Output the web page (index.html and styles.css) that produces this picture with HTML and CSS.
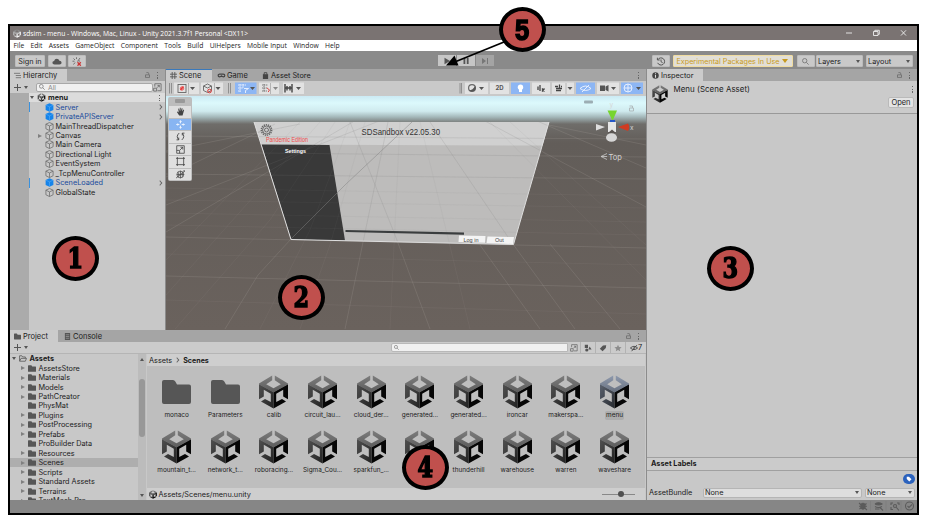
FILE: index.html
```
<!DOCTYPE html>
<html lang="en">
<head>
<meta charset="utf-8">
<title>sdsim - menu - Unity</title>
<link rel="stylesheet" href="styles.css">
</head>
<body>
<svg class="defs" aria-hidden="true">
  <defs>
    <linearGradient id="topface" x1="0" y1="0" x2="0" y2="1"><stop offset="0" stop-color="#7d7d7d"/><stop offset="1" stop-color="#5c5c5c"/></linearGradient>
    <linearGradient id="leftface" x1="0" y1="0" x2="1" y2="1"><stop offset="0" stop-color="#505050"/><stop offset="1" stop-color="#222"/></linearGradient>
    <symbol id="unity" viewBox="0 0 29 34">
      <path fill="url(#leftface)" d="M0 9L14.5 17V33.5L2 26.5L6 24L11.8 27V18.8L4.8 14.8V21.5L0 24.3Z"/>
      <path fill="#060606" d="M29 9L14.5 17V33.5L27 26.5L23 24L17.2 27V18.8L24.2 14.8V21.5L29 24.3Z"/>
      <path class="top" d="M0 8.4L13.2 .5V5.2L7.2 9.2L14.5 13.3L21.8 9.2L15.8 5.2V.5L29 8.4V9.4L14.5 17.6L0 9.4Z"/>
    </symbol>
    <symbol id="folder" viewBox="0 0 29 24"><path fill="#565656" d="M0 2Q0 0 2 0H11Q12.5 0 13.3 1.5L15 4.5H27Q29 4.5 29 6.5V22Q29 24 27 24H2Q0 24 0 22Z"/></symbol>
    <symbol id="cube" viewBox="0 0 10 10"><path fill="none" stroke="#707070" stroke-width=".9" d="M5 .6L9 2.4V7.5L5 9.5L1 7.5V2.4ZM1 2.4L5 4.4L9 2.4M5 4.4V9.5"/></symbol>
    <symbol id="prefab" viewBox="0 0 10 10"><path fill="#1684ea" d="M5 .3L9.3 2.2V7.8L5 9.8L.7 7.8V2.2Z"/><path fill="none" stroke="#6bb9fa" stroke-width=".5" d="M1 2.4L5 4.3L9 2.4M5 4.3V9"/></symbol>
    <symbol id="lock" viewBox="0 0 6 7"><path fill="none" stroke="#666" stroke-width=".9" d="M.6 3.3H5.4V6.4H.6ZM4.4 3V1.5Q4.4.6 3.4.6H1.7"/></symbol>
    <symbol id="search" viewBox="0 0 8 8"><path fill="none" stroke="#777" stroke-width="1" d="M5 5L7.6 7.6M.6 3.1a2.5 2.5 0 1 0 5 0a2.5 2.5 0 1 0 -5 0"/></symbol>
    <symbol id="expand" viewBox="0 0 10 10"><path fill="none" stroke="#666" stroke-width=".9" d="M2 4V.8H9V8.6H5M.7 5.8H4V9H.7ZM4.4 5.3L7 2.7M5 2.7H7V4.8"/></symbol>
  </defs>
</svg>

<div class="window">
  <header class="title"><svg class="i8 bright"><use href="#unity"/></svg><span>sdsim - menu - Windows, Mac, Linux - Unity 2021.3.7f1 Personal &lt;DX11&gt;</span>
    <svg class="winctl" viewBox="0 0 64 10"><path fill="none" stroke="#eee" stroke-width=".9" d="M1 5H7M28.500 3.500H33V7.500H28.500ZM29.800 3.500V2.300H34.300V6.300H33M56 2.300L61 7.500M61 2.300L56 7.500"/></svg>
  </header>
  <nav class="menu"><span>File</span><span>Edit</span><span>Assets</span><span>GameObject</span><span>Component</span><span>Tools</span><span>Build</span><span>UiHelpers</span><span>Mobile Input</span><span>Window</span><span>Help</span></nav>

  <div class="toolbar">
    <div class="tbtn signin">Sign in</div>
    <div class="tbtn w18"><svg viewBox="0 0 10 8"><path fill="#555" d="M2.500 7Q.4 7 .4 5.200Q.4 3.600 2.100 3.400Q2.700 1.200 4.800 1.200Q6.800 1.200 7.400 3.200Q9.600 3.300 9.600 5.200Q9.600 7 7.500 7Z"/></svg></div>
    <div class="tbtn w18"><svg viewBox="0 0 10 9"><path fill="none" stroke="#666" stroke-width=".9" d="M.5 4.200H2.500M4.500 .3V2M1.500 1.500L3 3M8 1L5.500 4.500M1.500 7.500L3 5.500M6.500 4H8"/><path stroke="#c33" stroke-width="1.300" d="M5.500 5.300L8.800 8.700M8.800 5.300L5.500 8.700"/></svg></div>
    <div class="play">
      <div><svg viewBox="0 0 8 8"><path fill="#555" d="M1.500 .8L7 4L1.500 7.200Z"/></svg></div>
      <div><svg viewBox="0 0 8 8"><path fill="#555" d="M1.500 1H3.300V7H1.500ZM4.800 1H6.600V7H4.800Z"/></svg></div>
      <div class="off"><svg viewBox="0 0 8 8"><path fill="#777" d="M1 1L5 4L1 7ZM6 1H7V7H6Z"/></svg></div>
    </div>
    <div class="tbtn w18 hist"><svg viewBox="0 0 10 10"><path fill="none" stroke="#555" stroke-width="1.100" d="M1.500 3A4 4 0 1 1 1.300 6.500M1 .8V3.300H3.500M5 2.700V5.200L6.800 6.300"/></svg></div>
    <div class="tbtn exp">Experimental Packages In Use<i class="dn gold"></i></div>
    <div class="tbtn w18 find"><svg><use href="#search"/></svg></div>
    <div class="tbtn drop layers">Layers<i class="dn"></i></div>
    <div class="tbtn drop layout">Layout<i class="dn"></i></div>
  </div>

  <main class="work">
    <div class="left">
      <div class="upper">
        <section class="hierarchy">
          <div class="strip"><div class="tab on"><svg viewBox="0 0 8 8"><path stroke="#666" stroke-width=".9" d="M0 1.500H7M2 4H8M2 6.500H8"/></svg>Hierarchy</div><span class="grow"></span><svg class="lk"><use href="#lock"/></svg><b class="dots"></b></div>
          <div class="row-tools"><b class="plus"></b><i class="dn"></i><div class="field"><svg><use href="#search"/></svg>All</div><svg class="ex"><use href="#expand"/></svg></div>
          <div class="tree">
            <div class="gutter"></div>
            <div class="items">
              <div class="it scene"><i class="dn"></i><svg class="i8"><use href="#unity"/></svg><b>menu</b><b class="dots"></b></div>
              <div class="it blue"><svg><use href="#prefab"/></svg>Server<em></em></div>
              <div class="it blue nomark"><svg><use href="#prefab"/></svg>PrivateAPIServer<em></em></div>
              <div class="it"><svg><use href="#cube"/></svg>MainThreadDispatcher</div>
              <div class="it"><i class="rt"></i><svg><use href="#cube"/></svg>Canvas</div>
              <div class="it"><svg><use href="#cube"/></svg>Main Camera</div>
              <div class="it"><svg><use href="#cube"/></svg>Directional Light</div>
              <div class="it"><svg><use href="#cube"/></svg>EventSystem</div>
              <div class="it"><svg><use href="#cube"/></svg>_TcpMenuController</div>
              <div class="it blue"><svg><use href="#prefab"/></svg>SceneLoaded<em></em></div>
              <div class="it"><svg><use href="#cube"/></svg>GlobalState</div>
            </div>
          </div>
        </section>

        <section class="sceneview">
          <div class="strip"><div class="tab on sel"><svg viewBox="0 0 8 8"><path fill="none" stroke="#555" d="M2.500 0V8M5.500 0V8M0 2.500H8M0 5.500H8"/></svg>Scene</div><div class="tab game"><svg viewBox="0 0 9 8"><path fill="none" stroke="#444" stroke-width="1.300" d="M2.500 2.500H6.500Q8.300 2.500 8.300 4T6.500 5.600Q5.500 5.600 4.500 4.500Q3.500 5.600 2.500 5.600Q.7 5.600 .7 4T2.500 2.500"/></svg>Game</div><div class="tab store"><svg viewBox="0 0 8 8"><path fill="#444" d="M1 2.500H7V8H1Z"/><path fill="none" stroke="#444" d="M2.500 3V.8H5.500V3"/></svg>Asset Store</div><span class="grow"></span><b class="dots"></b></div>
          <svg class="viewtools" viewBox="166 81 480 15">
            <rect x="166" y="81" width="480" height="15" fill="#c9c9c9"/>
            <path stroke="#909090" d="M169.500 83V93.500M171.500 83V93.500M228.500 83V93.500M230.500 83V93.500M460 83V93.500M461.500 83V93.500"/>
            <g fill="#e2e2e2"><rect x="174" y="82.500" width="25" height="11.500"/><rect x="201" y="82.500" width="22" height="11.500"/><rect x="259" y="82.500" width="20" height="11.500"/><rect x="283" y="82.500" width="21" height="11.500"/><rect x="465" y="82.500" width="23" height="11.500"/><rect x="490" y="82.500" width="19" height="11.500"/><rect x="532" y="82.500" width="18" height="11.500"/><rect x="552" y="82.500" width="22" height="11.500"/><rect x="597" y="82.500" width="22" height="11.500"/></g>
            <g fill="#8db6f4"><rect x="235" y="82.500" width="21.500" height="11.500"/><rect x="511" y="82.500" width="19" height="11.500"/><rect x="576" y="82.500" width="19" height="11.500"/><rect x="621" y="82.500" width="22" height="11.500"/></g>
            <path stroke="#b4b4b4" d="M188.500 83V94M214.500 83V94M270.500 83V94M566 83V94"/>
            <path fill="#555" d="M190 87H195L192.500 90ZM215.500 87H220.500L218 90ZM250 87H255L252.500 90ZM296 87H301L298.500 90ZM479 87H484L481.500 90ZM567.500 87H572.500L570 90ZM611 87H616L613.500 90ZM636 87H641L638.500 90Z"/><path fill="#888" d="M273 87H278L275.500 90Z"/>
            <g fill="none" stroke="#666" stroke-width=".9"><rect x="178" y="84.500" width="8" height="8"/><path d="M203.500 86L207.500 84L211.500 86V90.500L207.500 92.500L203.500 90.500ZM203.500 86L207.500 88L211.500 86"/><path stroke-width=".8" stroke-dasharray="1.300 .6" d="M262 85H268M262 88H267M262 91H267M264 84V92"/><path stroke="#444" stroke-width="1.400" d="M285 84V92.500M287 86V90.500M290 86V90.500M292 84V92.500M285 88H292"/><circle cx="472" cy="88" r="3.400" stroke-width="1.200"/><path stroke="#444" stroke-width="1.300" d="M538 86.500V90M540 85V91M542 88.500L544.500 91.500M544.500 88.500L542 91.500M555 86.500H558M561 86.500H562M556 88.500H562M556 90.500H561M559.500 84.500V88"/></g>
            <path stroke="#d33" stroke-width="1.400" d="M180.500 90L183.500 86.500"/><circle cx="182" cy="88.500" r="1.600" fill="none" stroke="#e44"/><circle cx="209.500" cy="91" r="1.800" fill="none" stroke="#d33"/><path fill="none" stroke="#d44" d="M267 88Q271 90 268 92"/>
            <path fill="#555" d="M474.500 90.500A3.500 3.500 0 0 0 475 86Q473 90 469 90.500Q472 92.500 474.500 90.500M600 85.500H605V91H600ZM605.500 86.500L608.500 85V91.500L605.500 90Z"/>
            <g fill="none" stroke="#eef4ff" stroke-width=".9"><path stroke-dasharray="1.600 .6" d="M238 85H246M238 88H243M238 91H241M240 84V92M243 84V88"/><path d="M244 88.500H248.500L245.500 90.500V93M580 88.500Q585.500 83.500 591 88.500Q585.500 92.500 580 88.500M582 92L589 85"/><circle cx="628" cy="88" r="4"/><path d="M624 88H632M628 84V92"/></g>
            <circle cx="520.500" cy="87.300" r="2.700" fill="#fff"/><path fill="#fff" d="M519 89H522V92H519Z"/><text x="495.500" y="90.400" class="two">2D</text>
          </svg>
          <svg class="viewport" viewBox="166 96 480 234">
            <defs>
              <linearGradient id="sky" x1="0" y1="0" x2="0" y2="1"><stop offset="0" stop-color="#cbeaf4"/><stop offset=".03" stop-color="#dcf9fc"/><stop offset=".065" stop-color="#cfeaee"/><stop offset=".09" stop-color="#a3b7b9"/><stop offset=".12" stop-color="#6f6d6a"/><stop offset=".2" stop-color="#625d59"/><stop offset="1" stop-color="#6a625d"/></linearGradient>
              <clipPath id="board"><path d="M254 122H549L513.500 244.500L291 239.500Z"/></clipPath>
              <clipPath id="ground"><path d="M166 124H646V330H166Z"/></clipPath>
              <g id="gridlines" fill="none">
                <path d="M166 205L440 97M166 151L300 124M166 177L275 124M166 232L390 100M291 239L258 275L225 329M345 329L388 122M166 237L646 248M166 174L646 179M166 152L646 157M166 136L646 139M166 276L646 288M549 125L646 145M440 97L646 207M500 105L646 168M430 122L510 240L575 329M350 122L395 235L430 329M480 245L540 329M550 244L620 329"/>
              </g>
              <g id="finegrid" fill="none"><path d="M166 188L646 196M166 200L646 208M166 213L646 222M166 225L646 235M166 254L646 265M166 300L646 314M175 329L270 220L335 122M260 329L310 230L350 122M300 329L330 245L365 122M390 329L400 122M470 329L420 122M646 280L490 122M646 245L510 122M166 295L320 122M166 260L300 122"/></g>
            </defs>
            <rect x="166" y="96" width="480" height="234" fill="url(#sky)"/>
            <g clip-path="url(#ground)"><use href="#gridlines" stroke="#b9b1ac" stroke-opacity=".22" stroke-width=".8"/><use href="#finegrid" stroke="#b9b1ac" stroke-opacity=".11" stroke-width=".7"/></g>
            <path fill="#bdbcbb" d="M254 122H549L513.500 244.500L291 239.500Z"/>
            <path fill="#d0d0d0" d="M254 122H549L542.500 145.500L261.500 144.500Z"/>
            <path fill="#393939" d="M261.500 144.500L329.500 145L345 240.500L291 239.500Z"/>
            <g clip-path="url(#board)"><use href="#gridlines" stroke="#777" stroke-opacity=".25" stroke-width=".7"/><use href="#finegrid" stroke="#888" stroke-opacity=".14" stroke-width=".6"/></g>
            <path fill="none" stroke="#808080" stroke-opacity=".6" stroke-width=".8" d="M291 239L345 185L412 122"/>
            <path fill="none" stroke="#dedede" stroke-width="1" d="M254 122L291 239.500L513.500 244.500L549 122"/>
            <path stroke="#3a3d3e" stroke-width="2.200" d="M345.500 231L464 233.700"/>
            <path fill="#f4f4f4" d="M459 235.500L485.500 236L485 242.800L458.500 242ZM487.500 236.500L514 237L513 244L486.500 243Z"/>
            <text class="s-btn" x="463.500" y="241.500">Log in</text><text class="s-btn" x="495" y="242.300">Out</text>
            <circle cx="266.500" cy="130" r="5.200" fill="none" stroke="#666" stroke-width="1.400" stroke-dasharray="1.300 .8"/><circle cx="266.500" cy="130" r="4" fill="none" stroke="#555" stroke-width=".8"/><circle cx="266.500" cy="130" r="2" fill="none" stroke="#555" stroke-width=".8"/>
            <text class="s-title" x="361.500" y="135" textLength="78.500" lengthAdjust="spacingAndGlyphs">SDSandbox v22.05.30</text>
            <text class="s-red" x="266" y="142" textLength="42" lengthAdjust="spacingAndGlyphs">Pandemic Edition</text>
            <text class="s-set" x="285" y="153" textLength="21" lengthAdjust="spacingAndGlyphs">Settings</text>
            <g><rect x="584" y="100.500" width="9" height="3" rx="1" fill="#9cadb3"/>
              <text x="609.500" y="107" class="axis">y</text><path fill="#77d52f" d="M607.500 110.500H617L612.500 121Z"/><path fill="#2557c8" d="M610 120H615V123H610Z"/><path fill="#ddd" d="M596 124L605 127L596 130.500Z"/><path fill="#d03b22" d="M618 127L628 123.500Q630.500 127 628 131Z"/><path fill="#e6e6e6" d="M608 122H616V132H608Z"/><path fill="#5a5552" d="M612 129.500L616 133H608Z"/><ellipse cx="611.500" cy="137.500" rx="5.500" ry="4.300" fill="#d6d6d6"/><text x="630" y="129.500" class="axis">x</text>
              <path fill="none" stroke="#ccc" stroke-width=".8" d="M607 153.500L601 156.500L607 159.500M601 156.500H607"/><text x="608.500" y="159.500" class="axis top-label">Top</text>
              <path fill="none" stroke="#b0bbbd" d="M629.500 108H633.500V111H629.500ZM632.500 108V106H629.500"/></g>
          </svg>
          <div class="palette"><span class="grip"></span>
            <div><svg viewBox="0 0 10 10"><path fill="#444" d="M3.500 9.500L1 5.500L1.800 5L3 6L2.500 2L3.300 1.700L4.200 4.700V.8H5.200V4.600L6.500 1.200L7.300 1.600L6.700 5L8.300 2.900L9 3.400L7.300 9.500Z"/></svg></div>
            <div class="act"><svg viewBox="0 0 10 10"><path fill="none" stroke="#fff" stroke-width=".9" d="M5 .8V3.700M5 6.300V9.200M.8 5H3.700M6.300 5H9.200M3.800 2L5 .8L6.200 2M3.800 8L5 9.200L6.200 8M2 3.800L.8 5L2 6.200M8 3.800L9.200 5L8 6.200"/></svg></div>
            <div><svg viewBox="0 0 10 10"><path fill="none" stroke="#444" d="M3.500 1.200Q-.5 5 3 8.500M3 8.700V6.200M3 8.700H.6M6.500 8.800Q10.500 5 7 1.500M7 1.300V3.800M7 1.300H9.400"/></svg></div>
            <div><svg viewBox="0 0 10 10"><path fill="none" stroke="#444" stroke-width=".9" d="M.8 .8H9.200V9.200H.8ZM.8 6H4V9.200M4.500 5.500L7.500 2.500M5 2.500H7.500V5"/></svg></div>
            <div><svg viewBox="0 0 10 10"><path fill="none" stroke="#444" stroke-width=".9" d="M1.500 0V10M8.500 0V10M0 1.500H10M0 8.500H10"/></svg></div>
            <div><svg viewBox="0 0 10 10"><path fill="none" stroke="#444" stroke-width=".8" d="M1 5A3.800 3.800 0 1 1 8.600 5A3.800 3.800 0 1 1 1 5M1 5H9M5 1V9M3 2.500V7.500M7 2.500V7.500M0 9L10 1M8 1H10"/></svg></div>
          </div>
        </section>
      </div>

      <section class="project">
        <div class="strip"><div class="tab on pj"><svg><use href="#folder"/></svg>Project</div><div class="tab cs"><svg viewBox="0 0 8 8"><path fill="#555" d="M1 0H7V8H1Z"/><path stroke="#aaa" stroke-width=".7" d="M2 2H6M2 4H6M2 6H6"/></svg>Console</div><span class="grow"></span><svg class="lk"><use href="#lock"/></svg><b class="dots"></b></div>
        <div class="row-tools ptools"><b class="plus"></b><i class="dn"></i><span class="grow"></span><div class="pfield"><svg><use href="#search"/></svg></div>
          <div class="pb"><svg><use href="#expand"/></svg></div>
          <div class="pb"><svg viewBox="0 0 10 10"><path fill="#555" d="M1 1H5V5H1ZM7 3L9.500 7H5.500Z"/><circle cx="3.500" cy="7.500" r="2" fill="#555"/></svg></div>
          <div class="pb"><svg viewBox="0 0 10 10"><path fill="#555" d="M1 6L5 2L9 1.500L8.500 5L4.500 9Z"/></svg></div>
          <div class="pb"><svg viewBox="0 0 10 10"><path fill="#8c8c8c" d="M5 .8L6.300 3.700L9.500 4L7.100 6.100L7.800 9.200L5 7.600L2.200 9.200L2.900 6.100L.5 4L3.700 3.700Z"/></svg></div>
          <div class="pb last"><svg viewBox="0 0 10 10"><path fill="none" stroke="#444" stroke-width="1.100" d="M.5 5Q5 .8 9.500 5Q5 9 .5 5M2 9L8.500 1.500M4 5H6"/></svg>7</div>
        </div>
        <div class="pbody">
          <div class="folders">
            <div class="fo root"><i class="dn"></i><svg viewBox="0 0 10 9"><path fill="none" stroke="#555" d="M.6 7.500V1H3.500L4.500 2.500H8V4M.6 8L2.500 4.300H9.500L8 8Z"/></svg><b>Assets</b></div>
            <div class="fo"><i class="rt"></i><svg><use href="#folder"/></svg>AssetsStore</div>
            <div class="fo"><i class="rt"></i><svg><use href="#folder"/></svg>Materials</div>
            <div class="fo"><i class="rt"></i><svg><use href="#folder"/></svg>Models</div>
            <div class="fo"><i class="rt"></i><svg><use href="#folder"/></svg>PathCreator</div>
            <div class="fo"><i class="rt none"></i><svg><use href="#folder"/></svg>PhysMat</div>
            <div class="fo"><i class="rt"></i><svg><use href="#folder"/></svg>Plugins</div>
            <div class="fo"><i class="rt"></i><svg><use href="#folder"/></svg>PostProcessing</div>
            <div class="fo"><i class="rt"></i><svg><use href="#folder"/></svg>Prefabs</div>
            <div class="fo"><i class="rt none"></i><svg><use href="#folder"/></svg>ProBuilder Data</div>
            <div class="fo"><i class="rt"></i><svg><use href="#folder"/></svg>Resources</div>
            <div class="fo cur"><i class="rt"></i><svg><use href="#folder"/></svg>Scenes</div>
            <div class="fo"><i class="rt"></i><svg><use href="#folder"/></svg>Scripts</div>
            <div class="fo"><i class="rt"></i><svg><use href="#folder"/></svg>Standard Assets</div>
            <div class="fo"><i class="rt"></i><svg><use href="#folder"/></svg>Terrains</div>
            <div class="fo"><i class="rt"></i><svg><use href="#folder"/></svg>TextMesh Pro</div>
          </div>
          <div class="sbar"><i class="up"></i><span></span><i class="dn"></i></div>
          <div class="assets">
            <div class="crumb">Assets<em></em><b>Scenes</b></div>
            <div class="grid">
              <div class="as"><svg class="fd"><use href="#folder"/></svg><span>monaco</span></div>
              <div class="as"><svg class="fd"><use href="#folder"/></svg><span>Parameters</span></div>
              <div class="as"><svg><use href="#unity"/></svg><span>calib</span></div>
              <div class="as"><svg><use href="#unity"/></svg><span>circuit_lau...</span></div>
              <div class="as"><svg><use href="#unity"/></svg><span>cloud_der...</span></div>
              <div class="as"><svg><use href="#unity"/></svg><span>generated...</span></div>
              <div class="as"><svg><use href="#unity"/></svg><span>generated...</span></div>
              <div class="as"><svg><use href="#unity"/></svg><span>ironcar</span></div>
              <div class="as"><svg><use href="#unity"/></svg><span>makerspa...</span></div>
              <div class="as picked"><svg><use href="#unity"/></svg><span>menu</span></div>
              <div class="as"><svg><use href="#unity"/></svg><span>mountain_t...</span></div>
              <div class="as"><svg><use href="#unity"/></svg><span>network_t...</span></div>
              <div class="as"><svg><use href="#unity"/></svg><span>roboracing...</span></div>
              <div class="as"><svg><use href="#unity"/></svg><span>Sigma_Cou...</span></div>
              <div class="as"><svg><use href="#unity"/></svg><span>sparkfun_...</span></div>
              <div class="as"><svg><use href="#unity"/></svg><span></span></div>
              <div class="as"><svg><use href="#unity"/></svg><span>thunderhill</span></div>
              <div class="as"><svg><use href="#unity"/></svg><span>warehouse</span></div>
              <div class="as"><svg><use href="#unity"/></svg><span>warren</span></div>
              <div class="as"><svg><use href="#unity"/></svg><span>waveshare</span></div>
            </div>
            <div class="path"><svg class="i8"><use href="#unity"/></svg>Assets/Scenes/menu.unity<span class="grow"></span><div class="slider"><i></i></div></div>
          </div>
        </div>
      </section>
    </div>

    <section class="inspector">
      <div class="strip"><div class="tab on insp"><svg viewBox="0 0 8 8"><circle cx="4" cy="4" r="3.700" fill="#444"/><path stroke="#ddd" stroke-width="1.200" d="M4 1.500V2.600M4 3.500V6.500"/></svg>Inspector</div><span class="grow"></span><svg class="lk"><use href="#lock"/></svg><b class="dots"></b></div>
      <div class="ihead"><svg><use href="#unity"/></svg><span>Menu (Scene Asset)</span><div class="iright"><b class="dots"></b><div class="open">Open</div></div></div>
      <div class="ibody"></div>
      <div class="labels">Asset Labels</div>
      <div class="tagrow"><div class="tag"><svg viewBox="0 0 8 8"><path fill="#fff" d="M1 1H4L7.300 4.300L4.300 7.300L1 4Z"/></svg></div></div>
      <div class="bundle"><span>AssetBundle</span><div class="sel1">None<i class="dn"></i></div><div class="sel2">None<i class="dn"></i></div></div>
    </section>
  </main>

  <footer class="status"><svg viewBox="0 0 62 12"><path stroke="#7a7a7a" stroke-width=".6" d="M15.500 1V11M31 1V11M46 1V11"/><g fill="none" stroke="#5b5b5b" stroke-width="1.100"><path fill="#5b5b5b" d="M6 4.500Q8 2 10 4.500V8Q8 10.500 6 8Z"/><path d="M4 3L12 10M4 6.300H12M4.500 9L11.500 3.500"/><path fill="#5b5b5b" d="M20 4Q23.500 1.500 27 4Q23.500 6 20 4"/><path d="M20 6.500Q23 8.500 27 6.500M20 9H24.500M25 7.500L28 10.500M38.500 6A1.500 1.500 0 1 0 41.500 6A1.500 1.500 0 1 0 38.500 6M36 5V3H38M42 3H44V5M36 7V9.500H38M41 7L44 10.500"/><circle cx="54.500" cy="6" r="4"/><path d="M52.500 6L54 7.500L57 4.500"/></g></svg></footer>
</div>

<svg class="arrow" viewBox="0 0 70 40"><path stroke="#000" stroke-width="1.800" d="M64 6L16 25.500"/><path d="M6 29.500L14.500 19.500L18.500 29.500Z"/></svg>
<div class="note n1"><span>1</span></div>
<div class="note n2"><span>2</span></div>
<div class="note n3"><span>3</span></div>
<div class="note n4"><span>4</span></div>
<div class="note n5"><span>5</span></div>
</body>
</html>
```
FILE: styles.css
```
* { box-sizing: border-box; }
body { margin: 0; width: 938px; height: 522px; overflow: hidden; background: #fff; position: relative; font: 7.300px/9px Inter, sans-serif; color: #1c1c1c; }
svg { display: block; flex: none; }
.defs { position: absolute; width: 0; height: 0; }
.top { fill: url(#topface); }
.grow { flex: 1; }
.i8 { width: 8px; height: 9px; }
.window { margin: 24px 0 0 8px; width: 911px; height: 491px; border: 2px solid #000; background: #8a8a8a; display: flex; flex-direction: column; }
.title { height: 14px; background: #7a7372; color: #fff; display: flex; align-items: center; padding-left: 3px; font: 6.720px/13px "Open Sans", sans-serif; gap: 2px; }
.title span { white-space: nowrap; }
.winctl { width: 64px; height: 10px; margin-left: auto; margin-right: 8px; }
.bright { filter: invert(1); }
.menu { height: 11px; background: #fff; display: flex; gap: 6.300px; padding-left: 3.500px; font: 6.750px/11px "Open Sans", sans-serif; white-space: nowrap; }
.toolbar { height: 18px; display: flex; padding: 4px 0 2px 5px; gap: 2.500px; background: #8a8a8a; }
.tbtn { height: 12px; background: #c9c9c9; border: 1px solid #bcbcbc; border-radius: 1px; display: flex; align-items: center; justify-content: center; white-space: nowrap; }
.tbtn svg { width: 10px; height: 9px; }
.signin { width: 30px; }
.w18 { width: 18px; }
.play { display: flex; gap: 1px; margin-left: 349px; }
.play div { width: 18px; height: 11px; background: #c6c6c6; display: flex; align-items: center; justify-content: center; }
.play .off { background: #a4a4a4; }
.play svg { width: 8px; height: 8px; }
.hist { margin-left: 156px; }
.exp { width: 120px; color: #c99b1e; border: 1px solid #f0dca0; background: #e2dfd6; font-size: 7.200px; gap: 3px; }
.find { margin-left: 1.500px; }
.find svg { width: 7px; height: 7px; }
.drop { justify-content: space-between; padding: 0 1.500px; margin-left: .5px; }
.layers, .layout { width: 47px; }
.layers { margin-left: -1.500px; }
.dn { flex: none; width: 0; height: 0; border: 2.500px solid transparent; border-top: 3px solid #555; border-bottom: 0; }
.up { flex: none; width: 0; height: 0; border: 2.500px solid transparent; border-bottom: 3px solid #555; border-top: 0; }
.gold { border-width: 3px; border-top: 4px solid #c79a1e; border-bottom: 0; }
.rt { flex: none; width: 0; height: 0; border: 2.500px solid transparent; border-left: 4px solid #808080; border-right: 0; }
.none { visibility: hidden; }
.dots { flex: none; width: 1.500px; height: 7px; background: repeating-linear-gradient(#666 0 1.400px, transparent 1.400px 2.700px); }
.lk { width: 5px; height: 6px; }
.plus { flex: none; width: 7px; height: 7px; background: linear-gradient(#555, #555) center / 7px 1px no-repeat, linear-gradient(#555, #555) center / 1px 7px no-repeat; }
.work { display: grid; grid-template-columns: 636px 1fr; column-gap: 1px; height: 431px; background: #8c8c8c; }
.left { display: flex; flex-direction: column; min-width: 0; }
.upper { height: 261px; display: grid; grid-template-columns: 155px 480px; column-gap: 1px; }
.strip { height: 12px; background: #a5a5a5; display: flex; align-items: center; padding-right: 7px; gap: 0; font-size: 7.500px; }
.strip .lk { margin-right: 7px; }
.tab { height: 12px; display: flex; align-items: center; gap: 2px; padding-left: 4px; white-space: nowrap; }
.tab svg { width: 7px; height: 7px; }
.tab.on { background: #cbcbcb; }
.hierarchy { background: #c8c8c8; display: flex; flex-direction: column; }
.hierarchy .tab { width: 57px; }
.row-tools { height: 12px; display: flex; align-items: center; padding-left: 4px; gap: 3px; background: #cbcbcb; }
.field { margin-left: 5px; width: 117px; height: 9px; border: 1px solid #a8a8a8; border-radius: 2px; background: #f0f0f0; display: flex; align-items: center; gap: 3px; padding-left: 2px; color: #888; font-size: 6.800px; }
.field svg { width: 6px; height: 6px; }
.ex { width: 9px; height: 9px; margin-left: -3px; }
.tree { flex: 1; display: grid; grid-template-columns: 19px 1fr; }
.gutter { background: #ababab; }
.items { display: flex; flex-direction: column; }
.it { height: 9.460px; display: flex; align-items: center; gap: 1.500px; padding: 0 3px 0 16px; white-space: nowrap; flex: none; }
.it svg { width: 9px; height: 9px; }
.it .rt { margin-left: -7px; margin-right: 1.500px; }
.it.scene { background: #dcdcdc; padding-left: 1px; gap: 2.500px; }
.scene .dots { margin-left: auto; margin-right: 2px; height: 6px; }
.it.blue { color: #1a4a9c; border-left: 1px solid #3a91dd; padding-left: 15px; }
.it.nomark { border-color: transparent; }
.it em, .crumb em { width: 4px; height: 4px; border: solid #666; border-width: 1px 1px 0 0; transform: scaleX(.8) rotate(45deg); }
.it em { margin-left: auto; }
.sceneview { position: relative; background: #c9c9c9; display: flex; flex-direction: column; }
.tab.sel { width: 46px; border-top: 1px solid #3a79bb; }
.tab.game { width: 45px; }
.tab.game svg { width: 9px; }
.tab.game { gap: 1px; padding-left: 5px; }
.tab.store { padding-left: 5px; font-size: 7.300px; }
.viewtools { width: 480px; height: 15px; }
.two { font: bold 6px Inter, sans-serif; fill: #555; }
.viewport { width: 480px; height: 234px; }
.s-title { font: 9px "Liberation Sans", sans-serif; fill: #333; }
.s-red { font: 6.500px "Liberation Sans", sans-serif; fill: #f04a4a; }
.s-set { font: bold 6px "Liberation Sans", sans-serif; fill: #fff; }
.s-btn { font: 5.500px "Liberation Sans", sans-serif; fill: #444; }
.axis { font: 6.500px Inter, sans-serif; fill: #d5d5d5; }
.top-label { font-size: 7.500px; }
.palette { position: absolute; left: 2px; top: 28px; width: 24px; height: 84px; background: #bdbdbd; padding: 9px 1px 1px; border-radius: 2px; display: flex; flex-direction: column; gap: 1px; }
.grip { position: absolute; left: 7px; top: 2px; width: 10px; height: 4px; background: #999; border-radius: 1px; }
.palette div { flex: 1; background: #dfdfdf; display: flex; align-items: center; justify-content: center; }
.palette .act { background: #88b5f2; }
.palette svg { width: 9px; height: 9px; }
.project { height: 170px; background: #c8c8c8; display: flex; flex-direction: column; }
.pj { width: 48px; }
.cs { padding-left: 6px; }
.ptools { height: 12px; padding-right: 0; border-bottom: 1px solid #b5b5b5; gap: 0; }
.ptools .plus { margin-right: 3px; }
.pfield { width: 177px; height: 9px; background: #f0f0f0; border: 1px solid #b8b8b8; border-radius: 2px 0 0 2px; padding: 1px 2px; }
.pfield svg { width: 5px; height: 5px; }
.pb { width: 15px; height: 11px; border-right: 1px solid #b2b2b2; display: flex; align-items: center; justify-content: center; }
.pb:nth-of-type(2) { width: 13px; }
.pb svg { width: 8px; height: 8px; }
.pb.last { width: 20px; border: 0; }
.pbody { flex: 1; min-height: 0; display: grid; grid-template-columns: 128px 8px 499px; column-gap: 0; background: #c8c8c8; height: 146px; }
.folders { overflow: hidden; height: 146px; }
.fo { height: 9.460px; display: flex; align-items: center; padding-left: 11px; gap: 2.700px; white-space: nowrap; }
.fo svg { width: 8px; height: 7px; }
.fo.root { padding-left: 2px; }
.fo.cur { background: #aeaeae; }
.sbar { background: #bcbcbc; display: flex; flex-direction: column; align-items: center; padding: 4px 0 3px; height: 146px; }
.sbar span { width: 6px; height: 58px; margin-top: 18px; border-radius: 3px; background: #989898; }
.sbar .dn { margin-top: auto; }
.assets { display: flex; flex-direction: column; height: 146px; margin-left: 1px; }
.crumb { height: 12px; display: flex; align-items: center; background: #cecece; padding-left: 2px; gap: 3px; }
.crumb b { margin-left: 1px; font-size: 7.100px; }
.grid { height: 122px; background: #bebebe; display: grid; grid-template-columns: repeat(10, 48.670px); grid-auto-rows: 55px; padding: 9px 0 0 5.300px; }
.as { display: flex; flex-direction: column; align-items: center; font-size: 6.400px; }
.as svg { width: 29px; height: 34px; }
.as .fd { height: 24px; margin: 5px 0; }
.as span { margin-top: 2px; padding: 0 1.500px; line-height: 9px; white-space: nowrap; }
.picked span { background: #adadad; border-radius: 2px; }
.picked svg { filter: sepia(1) hue-rotate(180deg) saturate(.6); }
.path { height: 12px; background: #cecece; display: flex; align-items: center; padding: 0 10px 0 2px; gap: 1.500px; }
.slider { width: 33px; height: 1px; background: #888; position: relative; }
.slider i { position: absolute; left: 16px; top: -2.500px; width: 6px; height: 6px; border-radius: 3px; background: #505050; }
.inspector { background: #c8c8c8; display: flex; flex-direction: column; min-width: 0; }
.insp { width: 56px; padding-left: 5px; font-size: 7.300px; }
.ihead { height: 33px; border-bottom: 1px solid #999; background: #cbcbcb; display: flex; padding: 3px 3px 0 5px; font-size: 7.900px; }
.ihead svg { width: 16px; height: 18px; margin-top: 1px; }
.ihead > span { margin: 1px 0 0 5.500px; letter-spacing: .05px; }
.iright { margin-left: auto; display: flex; flex-direction: column; align-items: flex-end; font-size: 7.500px; }
.iright .dots { margin: 2px 1px 4px 0; }
.open { width: 26px; height: 11px; background: #e4e4e4; border: 1px solid #bababa; border-radius: 2px; line-height: 9px; text-align: center; }
.ibody { flex: 1; }
.labels { height: 14px; border: solid #a0a0a0; border-width: 1px 0; font-weight: 700; line-height: 12px; padding-left: 4px; background: #cbcbcb; }
.tagrow { height: 15px; display: flex; justify-content: flex-end; align-items: center; padding-right: 2px; }
.tag { width: 12px; height: 10px; border-radius: 5px; background: #2b62bd; display: flex; align-items: center; justify-content: center; }
.tag svg { width: 6px; height: 6px; }
.bundle { height: 14px; display: flex; align-items: center; padding: 0 2px 1px 2px; gap: 3px; }
.bundle span { width: 51px; }
.bundle div { height: 10px; border: 1px solid #b5b5b5; border-radius: 2px; background: #dedede; display: flex; align-items: center; justify-content: space-between; padding: 0 2px 0 1px; }
.sel1 { width: 159px; }
.sel2 { flex: 1; }
.status { height: 13px; display: flex; justify-content: flex-end; background: #868686; }
.status svg { width: 62px; height: 12px; }
.arrow { position: absolute; left: 440px; top: 36px; width: 70px; height: 40px; }
.note { position: absolute; width: 47px; height: 45px; border: 4px solid #000; border-radius: 50%; background: #c0504d; display: flex; align-items: center; justify-content: center; font: 900 27px/36px "DejaVu Serif", serif; color: #000; }
.note span { transform: scaleX(.83); -webkit-text-stroke: 1.500px #000; }
.n1 { left: 52px; top: 236px; }
.n2 { left: 278px; top: 275px; }
.n3 { left: 707px; top: 246px; }
.n4 { left: 402px; top: 445px; }
.n5 { left: 499px; top: 7px; font-family: "Liberation Sans", sans-serif; font-size: 29px; }
.n5 span { transform: scaleX(.88); -webkit-text-stroke: 1.500px #000; }
```
